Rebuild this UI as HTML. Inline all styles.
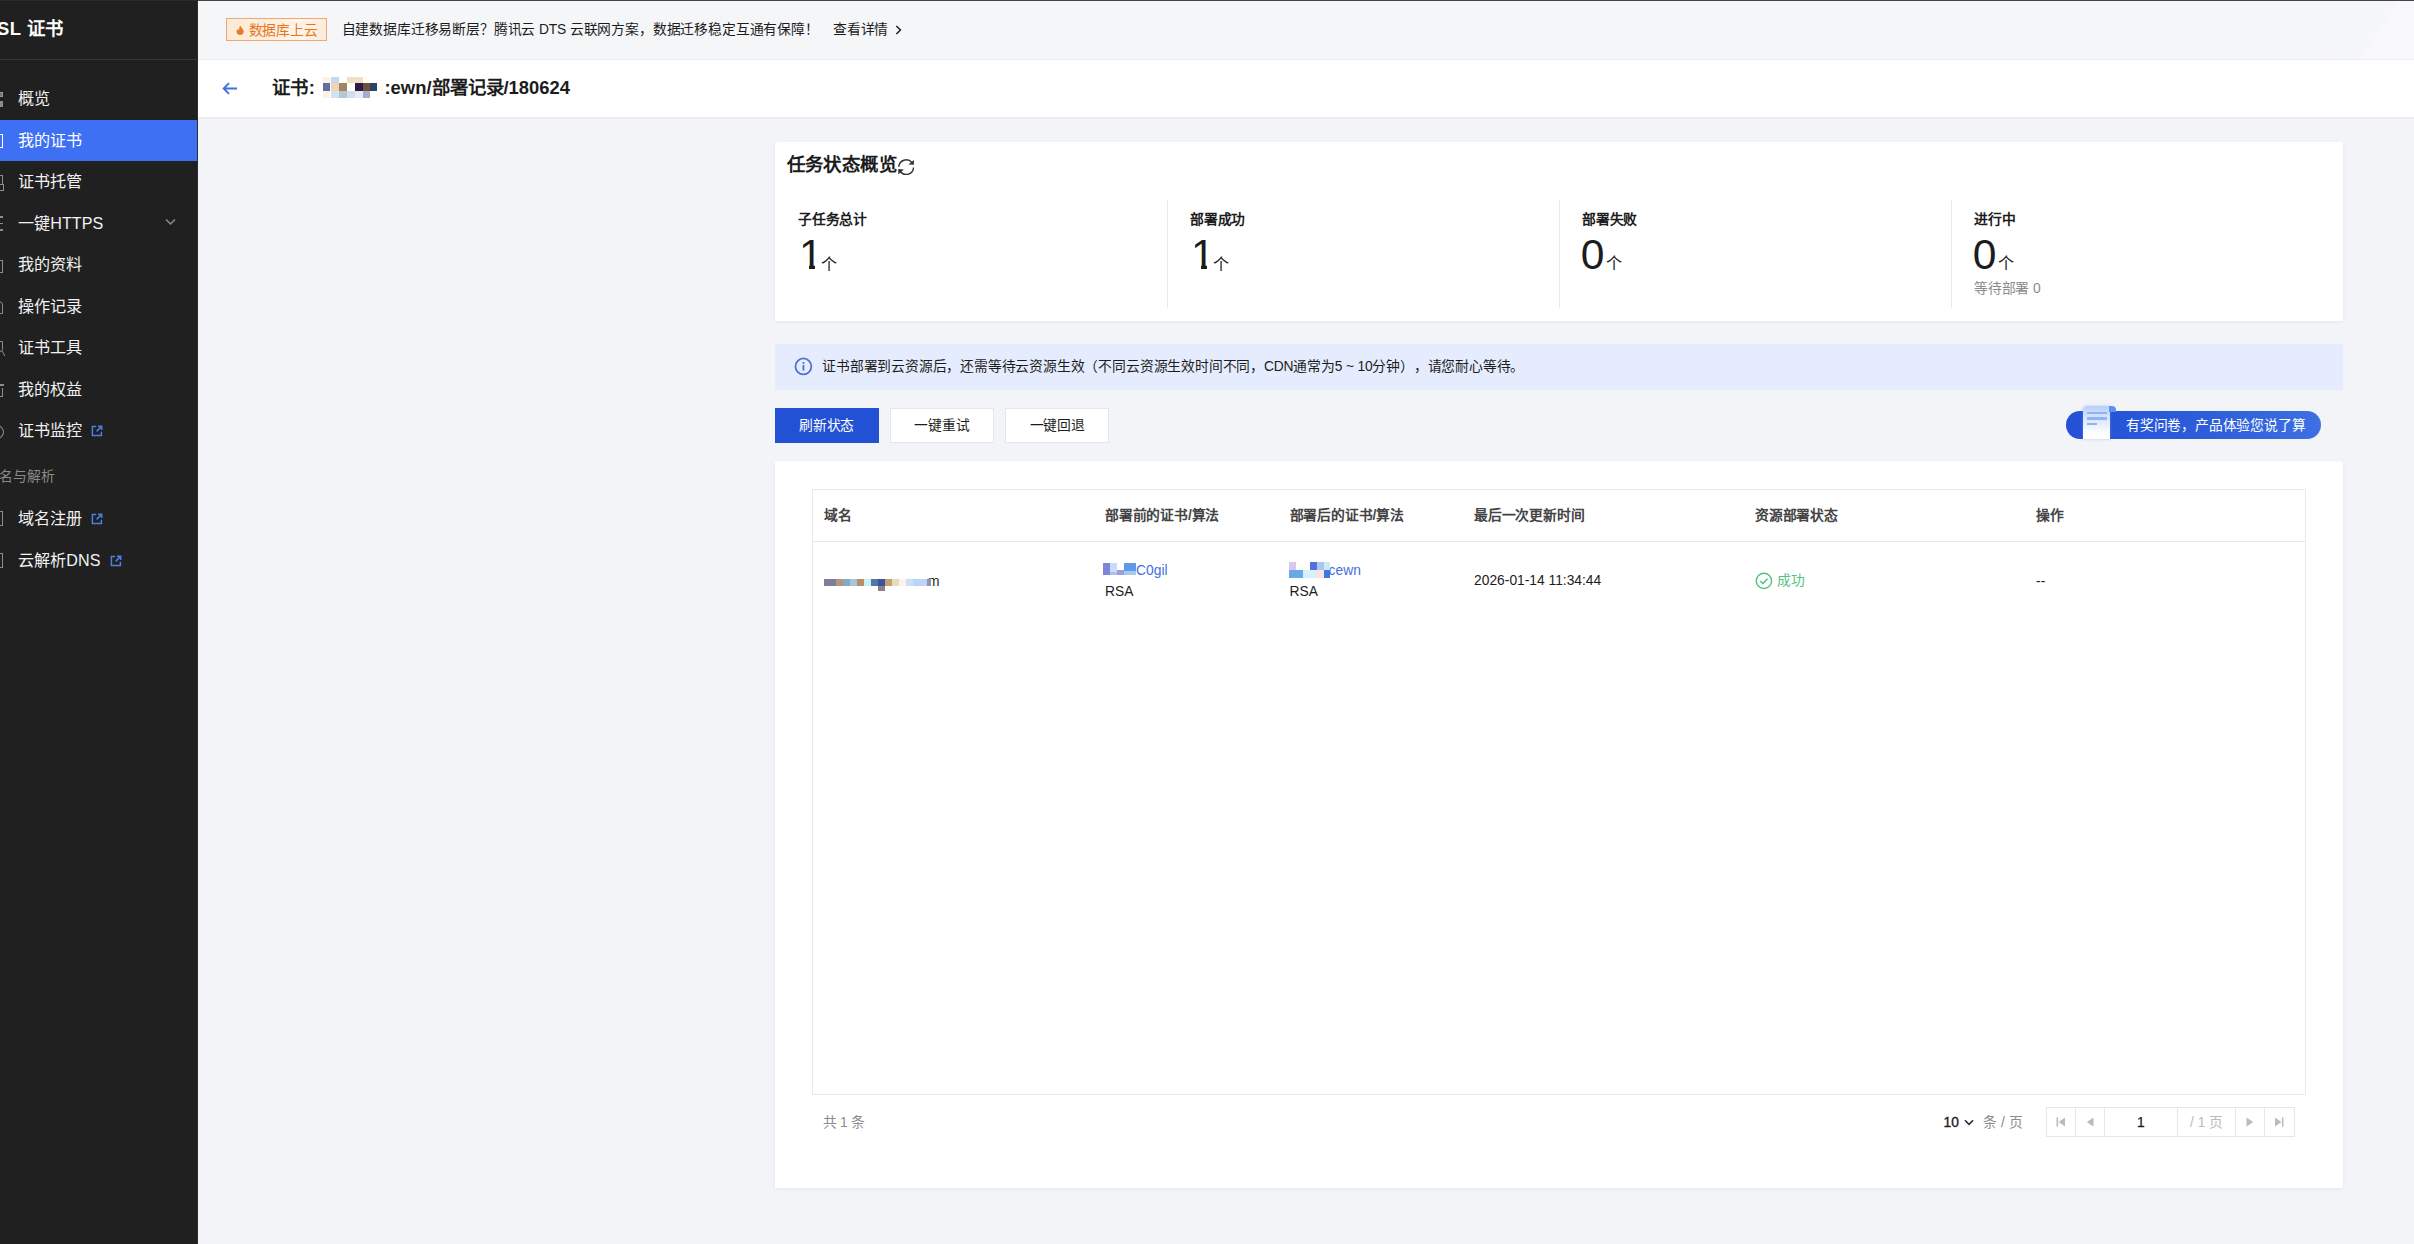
<!DOCTYPE html>
<html lang="zh-CN"><head><meta charset="utf-8">
<style>
*{box-sizing:border-box;margin:0;padding:0}
html,body{width:2414px;height:1244px;overflow:hidden}
body{text-spacing-trim:space-all;background:#f2f4f8;font-family:"Liberation Sans",sans-serif;color:#1c1c1c;position:relative;font-size:13.8px}
.abs{position:absolute}
.t{position:absolute;white-space:nowrap}
/* sidebar */
#side{position:absolute;left:0;top:0;width:198px;height:1244px;background:#202020;border-right:1px solid #2b2b2b}
#side .hd{position:absolute;left:0;top:0;width:197px;height:60px;border-bottom:1px solid #353535}
#side .ttl{position:absolute;left:-15.6px;top:15.5px;letter-spacing:0.4px;font-size:18.4px;line-height:26px;font-weight:bold;color:#fff;white-space:nowrap}
.mi{position:absolute;letter-spacing:0.1px;left:0;width:197px;height:41.5px;line-height:41.5px;color:#f2f2f2;font-size:16.1px;padding-left:18px;white-space:nowrap}
.mi.on{background:#3d70f2;color:#fff}
.mi .ext{display:inline-block;width:12px;height:12px;margin-left:9px;vertical-align:-1px}
.ic{position:absolute;left:0;top:0}
/* main */
#topline{position:absolute;left:0;top:0;width:2414px;height:1px;background:linear-gradient(90deg,#2b2b2b 0,#2b2b2b 198px,#444 198px,#444 100%);z-index:5}
#banner{position:absolute;left:198px;top:0;width:2216px;height:59px;background:linear-gradient(90deg,rgba(255,255,255,0) 0,rgba(255,255,255,0) 2080px,rgba(255,255,255,.15) 2216px),#f5f6f8}
#hdr{position:absolute;left:198px;top:59px;width:2216px;height:60px;background:#fff;border-top:1px solid #eceef2;border-bottom:2px solid #ebedf2}
.card{position:absolute;background:#fff;box-shadow:0 1px 3px rgba(54,58,80,.08)}
.lbl{position:absolute;letter-spacing:-0.2px;font-size:13.8px;font-weight:bold;color:#1c1c1c;line-height:18px;white-space:nowrap}
.num{position:absolute;font-size:42.6px;line-height:44px;color:#1c1c1c;white-space:nowrap}
.num span{font-size:16.1px;margin-left:1.4px;position:relative;top:0px}
.num.one span{margin-left:-1.6px;top:0.6px}
.cv{position:absolute;background:#fff;top:123px;height:6.5px;z-index:2}
.vdiv{position:absolute;width:1px;background:#e7e9ef}
.btn{position:absolute;letter-spacing:-0.2px;top:408px;height:34.5px;line-height:33px;text-align:center;font-size:13.8px;border:1px solid #e3e6ec;background:#fff;color:#1c1c1c}
.btn.pri{background:#2251d5;border-color:#2251d5;color:#fff}
.th{position:absolute;letter-spacing:-0.2px;top:504px;line-height:22px;font-size:13.8px;font-weight:bold;color:#444;white-space:nowrap}
.td{position:absolute;line-height:20px;font-size:13.8px;color:#1c1c1c;white-space:nowrap}
.px{position:absolute;z-index:3}
</style></head>
<body>
<div id="side">
  <div class="hd"><div class="ttl">SSL 证书</div></div>
  <div class="mi" style="top:78.3px">概览</div>
  <div class="mi on" style="top:119.8px">我的证书</div>
  <div class="mi" style="top:161.3px">证书托管</div>
  <div class="mi" style="top:202.8px">一键HTTPS</div>
  <div class="mi" style="top:244.3px">我的资料</div>
  <div class="mi" style="top:285.8px">操作记录</div>
  <div class="mi" style="top:327.3px">证书工具</div>
  <div class="mi" style="top:368.8px">我的权益</div>
  <div class="mi" style="top:410.3px">证书监控<svg class="ext" viewBox="0 0 12 12"><path d="M5.2 1.6H1.4v9h9V6.8" fill="none" stroke="#4d7fe6" stroke-width="1.5"/><path d="M7 1.3h3.7V5M10.4 1.6L5.6 6.4" fill="none" stroke="#4d7fe6" stroke-width="1.5"/></svg></div>
  <div class="t" style="left:0;top:467px;line-height:20px;font-size:13.8px;letter-spacing:-0.2px;color:#8a8a8a;margin-left:-14.5px">域名与解析</div>
  <div class="mi" style="top:498.2px">域名注册<svg class="ext" viewBox="0 0 12 12"><path d="M5.2 1.6H1.4v9h9V6.8" fill="none" stroke="#4d7fe6" stroke-width="1.5"/><path d="M7 1.3h3.7V5M10.4 1.6L5.6 6.4" fill="none" stroke="#4d7fe6" stroke-width="1.5"/></svg></div>
  <div class="mi" style="top:539.8px">云解析DNS<svg class="ext" viewBox="0 0 12 12"><path d="M5.2 1.6H1.4v9h9V6.8" fill="none" stroke="#4d7fe6" stroke-width="1.5"/><path d="M7 1.3h3.7V5M10.4 1.6L5.6 6.4" fill="none" stroke="#4d7fe6" stroke-width="1.5"/></svg></div>
  <svg class="abs" style="left:165px;top:218px" width="11" height="8" viewBox="0 0 11 8"><path d="M1 1.5l4.5 4.5L10 1.5" fill="none" stroke="#8d8d8d" stroke-width="1.5"/></svg>
</div>
<div id="banner">
  <div class="abs" style="left:0;top:0;width:2216px;height:59px;background:rgba(255,255,255,.3);clip-path:polygon(2162px 59px,2202px 0,2216px 0,2216px 59px)"></div>
  <div class="abs" style="left:27.5px;top:18px;width:101.5px;height:22.8px;border:1px solid #f0a871;background:linear-gradient(90deg,#fcead8,#fdeedd 45%,#fef4e9 72%,#fdebd9)"></div>
  <svg class="abs" style="left:38.3px;top:25px" width="8.3" height="10.6" viewBox="0 0 10 12"><path d="M5.2 0.3C5.6 2.6 9.3 4.2 9.3 7.6 9.3 10.1 7.4 11.7 5 11.7S0.7 10.1 0.7 7.6C0.7 6 1.6 4.8 2.6 4c0.1 1 0.6 1.6 1.2 1.9C3.6 3.6 4.2 1.6 5.2 0.3z" fill="#e77a23"/></svg>
  <div class="t" style="left:50.5px;top:19.5px;line-height:22px;font-size:13.8px;letter-spacing:-0.2px;color:#e5761d">数据库上云</div>
  <div class="t" style="left:143.5px;top:19px;line-height:22px;font-size:13.8px;letter-spacing:-0.16px;color:#1c1c1c">自建数据库迁移易断层？腾讯云 DTS 云联网方案，数据迁移稳定互通有保障！</div>
  <div class="t" style="left:635px;top:19px;line-height:22px;font-size:13.8px;letter-spacing:-0.2px;color:#1c1c1c">查看详情</div>
  <svg class="abs" style="left:696.9px;top:25px" width="7.3" height="10" viewBox="0 0 8 11"><path d="M1.5 1l4.5 4.5L1.5 10" fill="none" stroke="#1c1c1c" stroke-width="1.6"/></svg>
</div>
<div id="hdr">
  <svg class="abs" style="left:23px;top:22px" width="17" height="13" viewBox="0 0 17 13"><path d="M16 6.5H3M8 1.2L2.7 6.5 8 11.8" fill="none" stroke="#3f6fe0" stroke-width="1.9"/></svg>
  <div class="t" style="left:74px;top:15px;line-height:26px;font-size:18.4px;letter-spacing:0.4px;font-weight:bold;color:#1c1c1c">证书:</div>
  <div class="t" style="left:186.5px;top:15px;line-height:26px;font-size:18.4px;font-weight:bold;color:#1c1c1c">:ewn/部署记录/180624</div>
</div>
<div id="topline"></div>
<!-- mosaics -->
<div class="px" style="left:323.2px;top:77.4px;width:7.3px;height:5.8px;background:#fdf1e3"></div>
<div class="px" style="left:330.5px;top:77.4px;width:8.7px;height:5.8px;background:#c4d9f0"></div>
<div class="px" style="left:347.0px;top:77.4px;width:15.7px;height:5.8px;background:#f3dfc2"></div>
<div class="px" style="left:362.7px;top:77.4px;width:6.9px;height:5.8px;background:#fffdf0"></div>
<div class="px" style="left:323.2px;top:83.2px;width:7.3px;height:8.1px;background:#5f6fa3"></div>
<div class="px" style="left:330.5px;top:83.2px;width:8.7px;height:8.1px;background:#f0d6b0"></div>
<div class="px" style="left:339.2px;top:83.2px;width:7.8px;height:8.1px;background:#a38563"></div>
<div class="px" style="left:354.8px;top:83.2px;width:7.9px;height:8.1px;background:#2d1b42"></div>
<div class="px" style="left:362.7px;top:83.2px;width:6.9px;height:8.1px;background:#6d5040"></div>
<div class="px" style="left:369.6px;top:83.2px;width:7.9px;height:8.1px;background:#2b4466"></div>
<div class="px" style="left:377.5px;top:83.2px;width:6.9px;height:8.1px;background:#fffdf0"></div>
<div class="px" style="left:323.2px;top:91.3px;width:7.3px;height:6.5px;background:#fdf1e3"></div>
<div class="px" style="left:330.5px;top:91.3px;width:8.7px;height:6.5px;background:#d3e2f2"></div>
<div class="px" style="left:339.2px;top:91.3px;width:7.8px;height:6.5px;background:#b5c6d2"></div>
<div class="px" style="left:347.0px;top:91.3px;width:7.8px;height:6.5px;background:#d2dfeb"></div>
<div class="px" style="left:354.8px;top:91.3px;width:7.9px;height:6.5px;background:#e3ebf7"></div>
<div class="px" style="left:362.7px;top:91.3px;width:6.9px;height:6.5px;background:#a9a9c9"></div>
<div class="px" style="left:824.4px;top:578.6px;width:4.6px;height:7px;background:#8a7a90"></div>
<div class="px" style="left:829.0px;top:578.6px;width:7.2px;height:7.0px;background:#7a7fa0"></div>
<div class="px" style="left:836.2px;top:578.6px;width:6.8px;height:7.0px;background:#b8957a"></div>
<div class="px" style="left:843.1px;top:578.6px;width:7.0px;height:7.0px;background:#88a8c8"></div>
<div class="px" style="left:850.1px;top:578.6px;width:6.8px;height:7.0px;background:#a5c5dc"></div>
<div class="px" style="left:857.0px;top:578.6px;width:6.8px;height:7.0px;background:#bb8e68"></div>
<div class="px" style="left:863.8px;top:578.6px;width:7.0px;height:7.0px;background:#c8f0f8"></div>
<div class="px" style="left:870.8px;top:578.6px;width:6.8px;height:7.0px;background:#5078a0"></div>
<div class="px" style="left:877.7px;top:578.6px;width:7.2px;height:7.0px;background:#3a52a0"></div>
<div class="px" style="left:884.9px;top:578.6px;width:6.8px;height:7.0px;background:#c8a070"></div>
<div class="px" style="left:891.8px;top:578.6px;width:7.0px;height:7.0px;background:#e8dcc0"></div>
<div class="px" style="left:898.8px;top:578.6px;width:6.8px;height:7.0px;background:#fdf3e8"></div>
<div class="px" style="left:905.6px;top:578.6px;width:7.2px;height:7.0px;background:#c8e0fa"></div>
<div class="px" style="left:912.9px;top:578.6px;width:6.8px;height:7.0px;background:#b8d4f8"></div>
<div class="px" style="left:919.7px;top:578.6px;width:7.0px;height:7.0px;background:#c0d4f5"></div>
<div class="px" style="left:926.8px;top:578.6px;width:4.1px;height:7.0px;background:#8a96b8"></div>
<div class="px" style="left:877.7px;top:585.6px;width:7.2px;height:5.2px;background:#8c7f88"></div>
<div class="px" style="left:1102.8px;top:562.9px;width:7.2px;height:12.4px;background:#7b86d8"></div>
<div class="px" style="left:1110.1px;top:562.9px;width:6.8px;height:9.3px;background:#c5ddf8"></div>
<div class="px" style="left:1110.1px;top:572.2px;width:6.8px;height:3.1px;background:#b0c0ea"></div>
<div class="px" style="left:1116.9px;top:569.5px;width:7.2px;height:5.8px;background:#9aa0dc"></div>
<div class="px" style="left:1124.2px;top:562.9px;width:11.4px;height:8.3px;background:#5b9be8"></div>
<div class="px" style="left:1124.2px;top:571.1px;width:11.4px;height:4.1px;background:#a8c8f0"></div>
<div class="px" style="left:1288.6px;top:562.1px;width:7.6px;height:7.9px;background:#d8c8ec"></div>
<div class="px" style="left:1309.9px;top:562.1px;width:6.9px;height:7.9px;background:#5570d8"></div>
<div class="px" style="left:1316.8px;top:562.1px;width:7.6px;height:7.9px;background:#a8c8f0"></div>
<div class="px" style="left:1324.3px;top:562.1px;width:5.5px;height:7.9px;background:#d0e8f8"></div>
<div class="px" style="left:1288.6px;top:570.0px;width:14.4px;height:7.9px;background:#6aa8e8"></div>
<div class="px" style="left:1303.0px;top:570.0px;width:13.8px;height:7.9px;background:#d8f0fa"></div>
<div class="px" style="left:1316.8px;top:570.0px;width:6.9px;height:7.9px;background:#fde0e0"></div>
<div class="px" style="left:1323.6px;top:570.0px;width:6.2px;height:7.9px;background:#3a78e0"></div>
<!-- sidebar icon fragments -->
<div class="px" style="left:0;top:91.5px;width:3px;height:5.5px;background:#777;border:1px solid #999;border-left:0"></div>
<div class="px" style="left:0;top:100.5px;width:3px;height:6px;background:#8c8c8c"></div>
<div class="px" style="left:0;top:133.5px;width:2.5px;height:14px;border:1.6px solid #fff;border-left:0"></div>
<div class="px" style="left:0;top:175px;width:3px;height:9px;border:1.5px solid #8c8c8c;border-left:0;border-bottom:0"></div>
<div class="px" style="left:0;top:184px;width:4px;height:6.5px;border:1.5px solid #8c8c8c;border-left:0"></div>
<div class="px" style="left:0;top:216px;width:3px;height:1.6px;background:#8c8c8c"></div>
<div class="px" style="left:0;top:222.5px;width:3px;height:1.6px;background:#8c8c8c"></div>
<div class="px" style="left:0;top:229px;width:3px;height:1.6px;background:#8c8c8c"></div>
<div class="px" style="left:0;top:259.5px;width:3px;height:13px;border:1.5px solid #8c8c8c;border-left:0"></div>
<div class="px" style="left:-6px;top:300.5px;width:9px;height:13px;border:1.5px solid #8c8c8c;border-radius:0 4px 0 0"></div>
<div class="px" style="left:-6px;top:340.5px;width:9px;height:11px;border:1.5px solid #8c8c8c;border-radius:0 0 3px 0"></div>
<div class="px" style="left:0;top:351px;width:4px;height:5px;border-right:1.5px solid #8c8c8c;transform:skewX(25deg)"></div>
<div class="px" style="left:0;top:384px;width:3.5px;height:1.6px;background:#8c8c8c"></div>
<div class="px" style="left:0;top:388px;width:3px;height:8.5px;border:1.5px solid #8c8c8c;border-left:0;border-top:0"></div>
<div class="px" style="left:-12px;top:424.5px;width:15.5px;height:14px;border:1.5px solid #8c8c8c;border-radius:50%"></div>
<div class="px" style="left:0;top:510.5px;width:3px;height:15px;border:1.5px solid #8c8c8c;border-left:0"></div>
<div class="px" style="left:0;top:552.5px;width:3px;height:15px;border:1.5px solid #8c8c8c;border-left:0"></div>


<!-- overview card -->
<div class="card" style="left:774.6px;top:141.5px;width:1568.6px;height:179px">
  <div class="t" style="left:12px;top:9.8px;line-height:28px;font-size:18.4px;letter-spacing:0.4px;font-weight:bold;color:#1c1c1c">任务状态概览</div>
  <svg class="abs" style="left:123.4px;top:17.25px" width="16.4" height="16.4" viewBox="0 0 16.4 16.4"><path d="M0.75 7.8A7.45 7.45 0 0 1 13.9 3.5M15.6 8.5A7.45 7.45 0 0 1 2.45 12.8" fill="none" stroke="#333" stroke-width="1.45"/><path d="M15.9 0.9V5.85L10.4 5.4zM0.3 15.4V10.1L5.9 10.5z" fill="#333"/></svg>
  <div class="lbl" style="left:23.5px;top:69px">子任务总计</div>
  <div class="num one" style="left:24.3px;top:90.7px">1<span>个</span></div>
  <div class="cv" style="left:26.2px;width:8.1px"></div><div class="cv" style="left:40.2px;width:6.4px"></div>
  <div class="cv" style="left:418.2px;width:8.1px"></div><div class="cv" style="left:432.2px;width:6.4px"></div>
  <div class="vdiv" style="left:392px;top:58px;height:108px"></div>
  <div class="lbl" style="left:415.5px;top:69px">部署成功</div>
  <div class="num one" style="left:416.3px;top:90.7px">1<span>个</span></div>
  <div class="vdiv" style="left:784px;top:58px;height:108px"></div>
  <div class="lbl" style="left:807.5px;top:69px">部署失败</div>
  <div class="num" style="left:806.2px;top:90.7px">0<span>个</span></div>
  <div class="vdiv" style="left:1176px;top:58px;height:108px"></div>
  <div class="lbl" style="left:1199.5px;top:69px">进行中</div>
  <div class="num" style="left:1198.2px;top:90.7px">0<span>个</span></div>
  <div class="t" style="left:1199.5px;top:138px;line-height:18px;font-size:13.8px;letter-spacing:-0.2px;color:#8c8c8c">等待部署 0</div>
</div>
<!-- alert -->
<div class="abs" style="left:774.6px;top:343.5px;width:1568.6px;height:46px;background:#e5ecfd">
  <svg class="abs" style="left:19.4px;top:13.8px" width="18.8" height="18.8" viewBox="0 0 18 18"><circle cx="9" cy="9" r="7.6" fill="none" stroke="#4f70d2" stroke-width="1.7"/><rect x="8.2" y="7.6" width="1.7" height="5.4" fill="#4a6fd0"/><rect x="8.2" y="4.8" width="1.7" height="1.8" fill="#4a6fd0"/></svg>
  <div class="t" style="left:47.5px;top:12px;line-height:22px;font-size:13.8px;letter-spacing:-0.19px;color:#1c1c1c">证书部署到云资源后，还需等待云资源生效（不同云资源生效时间不同，CDN通常为5 ~ 10分钟），请您耐心等待。</div>
</div>
<!-- buttons -->
<div class="btn pri" style="left:774.6px;width:104px">刷新状态</div>
<div class="btn" style="left:890.2px;width:103.5px">一键重试</div>
<div class="btn" style="left:1005.4px;width:103.5px">一键回退</div>
<!-- survey -->
<div class="abs" style="left:2066px;top:411px;width:255px;height:28px;border-radius:14px;background:linear-gradient(90deg,#2350d6,#2f5fdb 60%,#3e70e2)"></div>
<div class="abs" style="left:2082.5px;top:405.5px;width:27.5px;height:33.5px;border-radius:4px 1px 0 0;background:linear-gradient(180deg,#b9d0fb 0%,#dbe7fd 40%,#ffffff 85%);box-shadow:0 0 3px rgba(120,160,240,.5)"></div>
<div class="abs" style="left:2109px;top:405.5px;width:7px;height:6px;border-radius:0 4px 0 0;background:#5d8ff5"></div>
<div class="abs" style="left:2086.5px;top:411.5px;width:20px;height:2.5px;background:#8fb2f8"></div>
<div class="abs" style="left:2086.5px;top:417px;width:20px;height:2.5px;background:#8fb2f8"></div>
<div class="abs" style="left:2086.5px;top:422.5px;width:10px;height:2.5px;background:#8fb2f8"></div>
<div class="t" style="left:2126px;top:414.8px;line-height:22px;font-size:13.8px;letter-spacing:-0.2px;color:#fff">有奖问卷，产品体验您说了算</div>
<div class="abs" style="left:774.6px;top:461px;width:1568.6px;height:1px;background:rgba(255,255,255,.8)"></div>
<!-- table card -->
<div class="card" style="left:774.6px;top:461.5px;width:1568.6px;height:726.5px">
  <div class="abs" style="left:37px;top:27.5px;width:1494.5px;height:606px;border:1px solid #e7eaf0"></div>
  <div class="abs" style="left:37px;top:79.5px;width:1494.5px;height:1px;background:#e4e7ee"></div>
  <div class="th" style="left:49.5px;top:43.2px">域名</div>
  <div class="th" style="left:330.5px;top:43.2px">部署前的证书/算法</div>
  <div class="th" style="left:515px;top:43.2px">部署后的证书/算法</div>
  <div class="th" style="left:699.5px;top:43.2px">最后一次更新时间</div>
  <div class="th" style="left:980.5px;top:43.2px">资源部署状态</div>
  <div class="th" style="left:1261.5px;top:43.2px">操作</div>
  <div class="td" style="left:153.3px;top:110.3px">m</div>
  <div class="td" style="left:361.5px;top:99.4px;color:#3f6fe0">C0gil</div>
  <div class="td" style="left:330.5px;top:120.4px">RSA</div>
  <div class="td" style="left:554px;top:99.4px;color:#3f6fe0">cewn</div>
  <div class="td" style="left:515px;top:120.4px">RSA</div>
  <div class="td" style="left:699.5px;top:109.9px">2026-01-14 11:34:44</div>
  <svg class="abs" style="left:980.4px;top:110.8px" width="17.8" height="17.8" viewBox="0 0 17 17"><circle cx="8.5" cy="8.5" r="7.3" fill="none" stroke="#55c182" stroke-width="1.4"/><path d="M5 8.6l2.5 2.5L12 6.4" fill="none" stroke="#55c182" stroke-width="1.4"/></svg>
  <div class="td" style="left:1002.5px;top:109.9px;color:#55c182;letter-spacing:-0.2px">成功</div>
  <div class="td" style="left:1261.5px;top:110.8px">--</div>
  <!-- pagination -->
  <div class="td" style="left:48px;top:651.6px;color:#8c8c8c;letter-spacing:-0.2px">共 1 条</div>
  <div class="td" style="left:1169px;top:651px;color:#1c1c1c;-webkit-text-stroke:.35px #1c1c1c">10</div>
  <svg class="abs" style="left:1189.5px;top:657.5px" width="10" height="7.5" viewBox="0 0 11 8"><path d="M1 1.2l4.5 4.6L10 1.2" fill="none" stroke="#2a2a2a" stroke-width="1.7"/></svg>
  <div class="td" style="left:1208.5px;top:651px;color:#8c8c8c">条 / 页</div>
  <div class="abs" style="left:1271.5px;top:645.5px;width:248.5px;height:30px;border:1px solid #e5e7ec"></div>
  <div class="abs" style="left:1300px;top:645.5px;width:1px;height:30px;background:#e5e7ec"></div>
  <div class="abs" style="left:1329px;top:645.5px;width:1px;height:30px;background:#e5e7ec"></div>
  <div class="abs" style="left:1402.5px;top:645.5px;width:1px;height:30px;background:#e5e7ec"></div>
  <div class="abs" style="left:1460.5px;top:645.5px;width:1px;height:30px;background:#e5e7ec"></div>
  <div class="abs" style="left:1489.5px;top:645.5px;width:1px;height:30px;background:#e5e7ec"></div>
  <svg class="abs" style="left:1281.5px;top:655.5px" width="10" height="10" viewBox="0 0 10 10"><rect x="0.5" y="0.5" width="1.6" height="9" fill="#bbb"/><path d="M9 0.5v9L2.6 5z" fill="#bbb"/></svg>
  <svg class="abs" style="left:1311px;top:655.5px" width="8" height="10" viewBox="0 0 8 10"><path d="M7.5 0.5v9L0.8 5z" fill="#bbb"/></svg>
  <div class="td" style="left:1362.5px;top:651px;color:#1c1c1c;-webkit-text-stroke:.25px #1c1c1c">1</div>
  <div class="td" style="left:1415.5px;top:651px;color:#bbb">/ 1 页</div>
  <svg class="abs" style="left:1471px;top:655.5px" width="8" height="10" viewBox="0 0 8 10"><path d="M0.5 0.5v9L7.2 5z" fill="#bbb"/></svg>
  <svg class="abs" style="left:1499.5px;top:655.5px" width="10" height="10" viewBox="0 0 10 10"><rect x="7.9" y="0.5" width="1.6" height="9" fill="#bbb"/><path d="M1 0.5v9L7.4 5z" fill="#bbb"/></svg>
</div>
</body></html>
